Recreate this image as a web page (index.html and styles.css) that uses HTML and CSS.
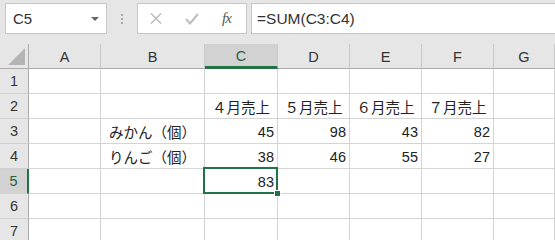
FILE: index.html
```html
<html>
<head>
    <link rel="stylesheet" href="styles.css">
</head>
<body>
<div id="bar">
    <div class="namebox">
        <span>C5</span>
        <span class="caret"></span>
    </div>
    <div class="grip"><i></i><i></i><i></i></div>
    <div class="buttons">
        <svg class="cancel" width="12" height="11" viewBox="0 0 12 11">
            <path d="M1 0.5 L11 10.5 M11 0.5 L1 10.5" stroke="#b8b8b8" stroke-width="1.4" fill="none"/>
        </svg>
        <svg class="enter" width="14" height="12" viewBox="0 0 14 12">
            <path d="M1 6 L5 10.5 L13 1" stroke="#bdbdbd" stroke-width="2" fill="none"/>
        </svg>
        <span class="fx">fx</span>
    </div>
    <div class="formula">=SUM(C3:C4)</div>
</div>
<div id="sheet">
    <div class="corner"><span></span></div>
    <div class="colhead">A</div>
    <div class="colhead">B</div>
    <div class="colhead active">C</div>
    <div class="colhead">D</div>
    <div class="colhead">E</div>
    <div class="colhead">F</div>
    <div class="colhead">G</div>

    <div class="rowhead">1</div>
    <div class="cell"></div><div class="cell"></div><div class="cell"></div><div class="cell"></div><div class="cell"></div><div class="cell"></div><div class="cell"></div>

    <div class="rowhead">2</div>
    <div class="cell"></div><div class="cell"></div>
    <div class="cell mid">４月売上</div>
    <div class="cell mid">５月売上</div>
    <div class="cell mid">６月売上</div>
    <div class="cell mid">７月売上</div>
    <div class="cell"></div>

    <div class="rowhead">3</div>
    <div class="cell"></div>
    <div class="cell mid">みかん（個）</div>
    <div class="cell num">45</div>
    <div class="cell num">98</div>
    <div class="cell num">43</div>
    <div class="cell num">82</div>
    <div class="cell"></div>

    <div class="rowhead">4</div>
    <div class="cell"></div>
    <div class="cell mid">りんご（個）</div>
    <div class="cell num">38</div>
    <div class="cell num">46</div>
    <div class="cell num">55</div>
    <div class="cell num">27</div>
    <div class="cell"></div>

    <div class="rowhead active">5</div>
    <div class="cell"></div><div class="cell"></div>
    <div class="cell num selected">83<div class="outline"><b></b></div></div>
    <div class="cell"></div><div class="cell"></div><div class="cell"></div><div class="cell"></div>

    <div class="rowhead">6</div>
    <div class="cell"></div><div class="cell"></div><div class="cell"></div><div class="cell"></div><div class="cell"></div><div class="cell"></div><div class="cell"></div>

    <div class="rowhead">7</div>
    <div class="cell"></div><div class="cell"></div><div class="cell"></div><div class="cell"></div><div class="cell"></div><div class="cell"></div><div class="cell"></div>
</div>
</body>
</html>
```

FILE: styles.css
```css
body {
    margin: 0;
    width: 555px;
    height: 240px;
    overflow: hidden;
    background: #fff;
    font-family: "Liberation Sans", "Noto Sans CJK JP", sans-serif;
    color: #222;
}
#bar {
    height: 44px;
    box-sizing: border-box;
    padding-top: 3px;
    background: #e6e6e6;
    display: flex;
    align-items: flex-start;
}
.namebox {
    margin-left: 5px;
    width: 102px;
    height: 31px;
    box-sizing: border-box;
    border: 1px solid #c6c6c6;
    background: #fff;
    display: flex;
    align-items: center;
    justify-content: space-between;
    padding: 0 7px 0 7px;
    font-size: 15px;
    color: #333;
}
.caret {
    width: 0;
    height: 0;
    border-left: 4px solid transparent;
    border-right: 4px solid transparent;
    border-top: 4px solid #666;
}
.grip {
    width: 30px;
    height: 31px;
    display: flex;
    flex-direction: column;
    align-items: center;
    justify-content: center;
    gap: 2px;
}
.grip i {
    width: 2px;
    height: 2px;
    background: #a8a8a8;
}
.buttons {
    width: 110px;
    height: 31px;
    box-sizing: border-box;
    border: 1px solid #c6c6c6;
    background: #fff;
    display: flex;
    align-items: center;
    padding-left: 12px;
}
.enter {
    margin-left: 23px;
}
.fx {
    margin-left: 23px;
    font-family: "Liberation Serif", serif;
    font-style: italic;
    font-size: 15px;
    color: #555;
    letter-spacing: -1px;
}
.formula {
    margin-left: 4px;
    flex: 1;
    height: 31px;
    box-sizing: border-box;
    border: 1px solid #c6c6c6;
    border-right: none;
    background: #fff;
    display: flex;
    align-items: center;
    padding-left: 5px;
    font-size: 15.5px;
    color: #333;
}
#sheet {
    display: grid;
    grid-template-columns: 29px 72px 104px 73px 72px 72px 72px 1fr;
    grid-auto-rows: 25px;
    font-size: 14px;
}
.corner {
    background: #e6e6e6;
    border-right: 1px solid #ababab;
    border-bottom: 1px solid #ababab;
    box-sizing: border-box;
    position: relative;
}
.corner span {
    position: absolute;
    right: 3px;
    bottom: 3px;
    width: 0;
    height: 0;
    border-left: 17px solid transparent;
    border-bottom: 17px solid #b4b4b4;
}
.colhead {
    background: #e6e6e6;
    border-right: 1px solid #c9c9c9;
    border-bottom: 1px solid #ababab;
    box-sizing: border-box;
    display: flex;
    align-items: center;
    justify-content: center;
    color: #333;
    font-size: 14.5px;
    padding-top: 1px;
}
.colhead.active {
    background: #d2d2d2;
    border-bottom: 3px solid #217346;
    color: #2a5e45;
}
.rowhead {
    background: #e6e6e6;
    border-right: 1px solid #ababab;
    border-bottom: 1px solid #d0d0d0;
    box-sizing: border-box;
    display: flex;
    align-items: center;
    justify-content: center;
    color: #333;
    font-size: 14.5px;
}
.rowhead.active {
    background: #d2d2d2;
    border-right: 2px solid #217346;
    color: #2a5e45;
}
.cell {
    border-right: 1px solid #d4d4d4;
    border-bottom: 1px solid #d4d4d4;
    box-sizing: border-box;
    display: flex;
    align-items: center;
    padding: 1px 3px 0 3px;
    white-space: nowrap;
    color: #222;
}
.mid {
    justify-content: center;
    font-size: 14.5px;
}
.num {
    justify-content: flex-end;
    font-size: 14.5px;
}
.selected {
    position: relative;
}
.outline {
    position: absolute;
    left: -2px;
    top: -2px;
    right: -1px;
    bottom: -1px;
    border: 2px solid #217346;
    z-index: 2;
}
.outline b {
    position: absolute;
    right: -5px;
    bottom: -5px;
    width: 5px;
    height: 5px;
    background: #217346;
    border: 1px solid #fff;
}
```
